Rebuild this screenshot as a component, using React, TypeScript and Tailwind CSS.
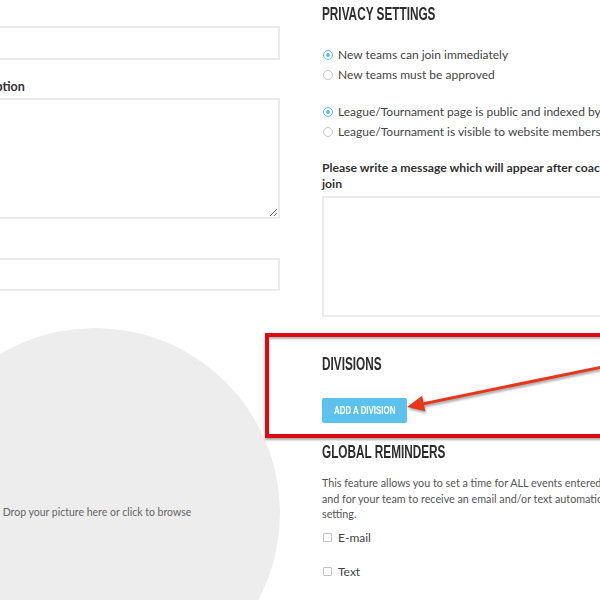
import React from 'react';

const bodyFont = { fontFamily: 'Lato, "Open Sans", "Liberation Sans", sans-serif' };

const Radio: React.FC<{ checked?: boolean; label: string }> = ({ checked, label }) => (
  <div className="flex items-center h-[20px] whitespace-nowrap">
    <span
      className={
        checked
          ? 'w-[10px] h-[10px] rounded-full border border-[#5bbde8] flex items-center justify-center ml-[1px]'
          : 'w-[10px] h-[10px] rounded-full border border-[#c8c8c8] ml-[1px]'
      }
    >
      {checked && <span className="w-[4px] h-[4px] rounded-full bg-[#5bbde8]" />}
    </span>
    <span className="ml-[5px] text-[12px] text-[#444]">{label}</span>
  </div>
);

const Checkbox: React.FC<{ label: string }> = ({ label }) => (
  <div className="flex items-center h-[20px]">
    <span className="w-[9px] h-[9px] border border-[#c4c4c4] rounded-[1px] ml-[1px]" />
    <span className="ml-[6px] text-[12px] text-[#444]">{label}</span>
  </div>
);

const Heading: React.FC<{ children: React.ReactNode; className?: string }> = ({ children, className }) => (
  <h2
    className={`text-[19px] leading-[18px] font-bold text-[#2e2e2e] origin-left scale-x-[0.62] whitespace-nowrap ${className ?? ''}`}
    style={{ fontFamily: '"Liberation Sans", Arial, sans-serif' }}
  >
    {children}
  </h2>
);

export default function App() {
  return (
    <div className="relative w-[600px] h-[600px] overflow-hidden bg-white" style={bodyFont}>
      <div className="flex -ml-[48px]">
        {/* left column */}
        <div className="w-[328px] shrink-0 flex flex-col">
          <div className="mt-[26px] h-[34px] border-2 border-[#ebebeb] bg-white" />
          <label className="mt-[19px] ml-[8px] text-[12.5px] leading-[16px] font-bold text-[#333] whitespace-nowrap">
            Description
          </label>
          <textarea className="mt-[3px] h-[121px] border-2 border-[#ebebeb] bg-white outline-none resize" />
          <div className="mt-[39px] h-[33px] border-2 border-[#ebebeb] bg-white" />
          <div className="mt-[37px] -ml-[42px] w-[370px] h-[370px] shrink-0 rounded-full bg-[#ededed] flex items-center justify-center">
            <span className="ml-[4px] text-[10.5px] text-[#666] whitespace-nowrap">
              Drop your picture here or click to browse
            </span>
          </div>
        </div>

        {/* right column */}
        <div className="ml-[42px] w-[420px] shrink-0 flex flex-col">
          <Heading className="mt-[5px]">PRIVACY SETTINGS</Heading>
          <div className="mt-[22px]">
            <Radio checked label="New teams can join immediately" />
            <Radio label="New teams must be approved" />
          </div>
          <div className="mt-[17px]">
            <Radio checked label="League/Tournament page is public and indexed by search engines" />
            <Radio label="League/Tournament is visible to website members only" />
          </div>
          <p className="mt-[18px] text-[12.2px] leading-[16px] font-bold text-[#333] whitespace-nowrap">
            Please write a message which will appear after coaches/teams
            <br />
            join
          </p>
          <textarea className="mt-[4px] h-[121px] border-2 border-[#ebebeb] bg-white outline-none resize-none" />

          <div className="mt-[16px] -ml-[57px] pl-[53px] pt-[18px] pb-[11px] border-4 border-[#dc0a12] shadow-[0_2px_2px_rgba(0,0,0,0.35),inset_0_2px_2px_rgba(0,0,0,0.3)]">
            <Heading>DIVISIONS</Heading>
            <button className="mt-[25px] w-[85px] h-[25px] rounded-[2px] bg-[#5bc2ee] flex items-center justify-center">
              <span
                className="text-[11px] font-bold text-white scale-x-[0.72] whitespace-nowrap"
                style={{ fontFamily: '"Liberation Sans", Arial, sans-serif' }}
              >
                ADD A DIVISION
              </span>
            </button>
          </div>

          <Heading className="mt-[5px]">GLOBAL REMINDERS</Heading>
          <p className="mt-[14px] text-[10.75px] leading-[15.5px] text-[#555] whitespace-nowrap">
            This feature allows you to set a time for ALL events entered in your schedule
            <br />
            and for your team to receive an email and/or text automatically based on this
            <br />
            setting.
          </p>
          <div className="mt-[6px]">
            <Checkbox label="E-mail" />
          </div>
          <div className="mt-[14px]">
            <Checkbox label="Text" />
          </div>
        </div>
      </div>

      {/* annotation arrow */}
      <svg
        className="absolute left-0 top-0 pointer-events-none drop-shadow-[1px_2px_1px_rgba(0,0,0,0.35)]"
        width="600"
        height="600"
        viewBox="0 0 600 600"
      >
        <line x1="602" y1="367" x2="420" y2="404.5" stroke="#e8361c" strokeWidth="3" />
        <polygon points="407,407 425.3,411.3 422.1,395.7" fill="#e8361c" />
      </svg>
    </div>
  );
}
